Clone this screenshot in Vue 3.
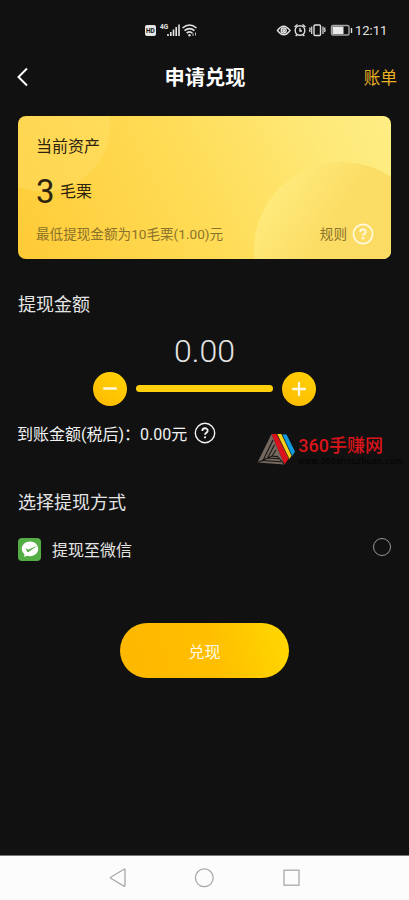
<script setup>
import { ref } from 'vue'

const balance = ref(3)
const amount = ref('0.00')
const received = ref('0.00')
</script>

<template>
  <div class="screen">
    <div class="status">
      <svg class="signal" width="54" height="16" viewBox="0 0 54 16">
        <rect x="0" y="3" width="11" height="11" rx="2" fill="#e6e6e6" />
        <text x="1" y="11.3" class="hd">HD</text>
        <text x="15" y="7.300" class="gen">4G</text>
        <path d="M23 14v-2M25.800 14v-4M28.500 14V7.500M31.200 14V5M34 14V2.500" stroke="#e6e6e6" stroke-width="1.600" />
        <g fill="none" stroke="#e0e0e0" stroke-width="1.600">
          <path d="M37.500 6q7-6 14 0M39.500 8.700q5-4.200 10 0M41.700 11.200q3-2.500 5.600 0" />
        </g>
        <circle cx="44.500" cy="13.300" r="1.200" fill="#e0e0e0" />
        <path d="M48 14v-3M50.500 10.500v3" stroke="#bdbdbd" />
      </svg>
      <div class="status-right">
        <svg width="78" height="16" viewBox="0 0 78 16" fill="none" stroke="#dedede" stroke-width="1.400">
          <path d="M.500 8.500q6-8.500 12.500 0Q7 17 .500 8.500Z" />
          <circle cx="6.700" cy="8.500" r="2.500" />
          <circle cx="6.700" cy="8.500" r=".8" fill="#dedede" />
          <circle cx="23" cy="8.500" r="4.800" />
          <path d="M17.500 5l3-2.500M28.500 5l-3-2.500M23 6v3h2M20 12.500l-1.300 1.500M26 12.500l1.300 1.500" />
          <rect x="37" y="3" width="6.500" height="10.500" rx="1" />
          <path d="M34.700 4.500v7.500M46 4.500v7.500M32.500 5.500l.8 1.500-.8 1.500.8 1.500M48.200 5.500l-.8 1.500.8 1.500-.8 1.500" stroke-width="1.200" />
          <rect x="54.500" y="3.500" width="17.500" height="9.500" rx="1.500" stroke="#a5a5a5" />
          <rect x="55.500" y="4.500" width="11" height="7.500" fill="#e8e8e8" stroke="none" />
          <path d="M74.500 6v5" />
        </svg>
        <span class="time">12:11</span>
      </div>
    </div>

    <header class="header">
      <svg class="back" width="12" height="20" viewBox="0 0 12 20" fill="none" stroke="#fff" stroke-width="2">
        <path d="M11 1.500L2.500 10l8.500 8.500" />
      </svg>
      <h1>申请兑现</h1>
      <a class="bill">账单</a>
    </header>

    <section class="card">
      <div class="card-title">当前资产</div>
      <div class="balance"><b>{{ balance }}</b><span>毛栗</span></div>
      <div class="card-foot">
        <span>最低提现金额为10毛栗(1.00)元</span>
        <span class="rule">规则
          <svg width="22" height="22" viewBox="0 0 22 22" fill="none" stroke="#fff9df" stroke-width="1.700">
            <circle cx="11" cy="11" r="9.600" />
            <path d="M8.300 9c0-3.600 5.400-3.600 5.400-.3 0 2-2.700 2-2.700 4.100" stroke-width="2" />
            <circle cx="11" cy="15.300" r="1.200" fill="#fff9df" stroke="none" />
          </svg>
        </span>
      </div>
    </section>

    <h2 class="amount-title">提现金额</h2>
    <div class="amount">{{ amount }}</div>
    <div class="slider">
      <button class="round">
        <svg width="34" height="34" viewBox="0 0 34 34"><path d="M11 16.500h12" /></svg>
      </button>
      <div class="track"></div>
      <button class="round">
        <svg width="34" height="34" viewBox="0 0 34 34"><path d="M11 17h12M17 11v12" /></svg>
      </button>
    </div>

    <div class="received">
      <span>到账金额(税后)：{{ received }}元</span>
      <svg width="22" height="22" viewBox="0 0 22 22" fill="none" stroke="#f2f2f2" stroke-width="1.400">
        <circle cx="11" cy="11" r="9.700" />
        <path d="M8.300 9c0-3.600 5.400-3.600 5.400-.3 0 2-2.700 2-2.700 4.100" stroke-width="1.800" />
        <circle cx="11" cy="15.300" r="1.100" fill="#f2f2f2" stroke="none" />
      </svg>
      <div class="mark">
        <svg width="38" height="34" viewBox="0 0 38 34">
          <path d="M13.500 2L-.500 30.500l27 2Z" fill="#75695f" />
          <path d="M15 8L5 28.500l18 1.300M16.500 13L9.500 26l12 .8M18 18l-4 6 6 .6M0 30.500L14 24M26 32L20 25" fill="none" stroke="#161412" stroke-width="1.100" />
          <path d="M13.500 2h5.500l12 24-4.500 6.500Z" fill="#d9121c" />
          <path d="M19 2h4.500l10.500 21-3 4.500Z" fill="#f6cf16" />
          <path d="M24 2.500h4.500l8.500 17-3 5Z" fill="#129bdc" />
          <path d="M18.800 2l12.400 25M23.800 2l10.200 22" stroke="#161412" stroke-width=".7" />
        </svg>
        <div class="mark-text">
          <strong>360手赚网</strong>
          <small>www.360shouzhuan.com</small>
        </div>
      </div>
    </div>

    <h2 class="method-title">选择提现方式</h2>
    <div class="method">
      <svg width="23" height="23" viewBox="0 0 23 23">
        <rect width="23" height="23" rx="4" fill="#55ad46" />
        <path d="M12 3.500c4.700 0 8.200 3.200 8.200 7.300s-3.500 7.400-8.200 7.400c-1 0-2-.2-3-.5L6.200 19l.3-2.800C4.800 14.900 3.800 13 3.800 10.800 3.800 6.700 7.300 3.500 12 3.500Z" fill="#fff" />
        <path d="M7.500 10l2.700 1.700 9.300-4.300-8.900 6.600q-.9.500-1.500-.5Z" fill="#55ad46" />
      </svg>
      <span>提现至微信</span>
      <i class="radio"></i>
    </div>

    <button class="submit">兑现</button>

    <nav class="nav">
      <svg width="190" height="20" viewBox="0 0 190 20" fill="none" stroke="#a9a9a9" stroke-width="1.300">
        <path d="M16 1.800v15.800q0 1-1 .5L1.700 10.300q-.7-.6 0-1.100L15 1.300q1-.5 1 .5Z" />
        <circle cx="95.300" cy="9.800" r="8.900" />
        <rect x="175" y="2.200" width="15" height="15" />
      </svg>
    </nav>
  </div>
</template>

<style>
body {
  margin: 0;
  background: #111;
}
</style>

<style scoped>
.screen {
  box-sizing: border-box;
  width: 409px;
  height: 900px;
  display: flex;
  flex-direction: column;
  overflow: hidden;
  background: #111;
  color: #e4e4e4;
  font-family: Roboto, "Noto Sans CJK SC", sans-serif;
  font-size: 16px;
  font-weight: 400;
}
.screen > * {
  flex-shrink: 0;
}
svg {
  display: block;
  overflow: visible;
}
button {
  border: 0;
  padding: 0;
  font: inherit;
}
h1,
h2 {
  margin: 0;
}
.status {
  display: flex;
  align-items: center;
  justify-content: space-between;
  height: 44px;
  padding: 16px 21px 0 145px;
  box-sizing: border-box;
}
.hd {
  font: bold 6.5px Roboto, sans-serif;
  fill: #111;
}
.gen {
  font: bold 6.5px Roboto, sans-serif;
  fill: #e6e6e6;
}
.status-right {
  display: flex;
  align-items: center;
}
.time {
  width: 33px;
  padding-top: 1px;
  font-size: 13px;
  line-height: 16px;
  white-space: nowrap;
}
.header {
  display: grid;
  grid-template-columns: 60px 1fr 60px;
  align-items: center;
  height: 66px;
  padding: 0 12px 0 16px;
  margin-bottom: 6px;
  box-sizing: border-box;
}
.header h1 {
  padding: 1px 3px 0 0;
  color: #fff;
  font-size: 20.2px;
  font-weight: 700;
  line-height: 30px;
  text-align: center;
}
.bill {
  color: #e8b022;
  font-size: 16.6px;
  text-align: right;
}
.card {
  display: flex;
  flex-direction: column;
  height: 143px;
  margin: 0 18px;
  padding: 20px 17px 0 18px;
  box-sizing: border-box;
  border-radius: 8px;
  color: #2d240f;
  background:
    radial-gradient(circle at 25px 8px, rgba(255, 226, 110, 0.4) 0 67px, transparent 68px),
    linear-gradient(65deg, #ffcb36 0%, #ffdc57 48%, #feea7b 85%, #ffee84 100%);
  position: relative;
  overflow: hidden;
}
.card::before {
  content: "";
  position: absolute;
  left: 236px;
  top: 46px;
  width: 176px;
  height: 176px;
  border-radius: 50%;
  background: linear-gradient(125deg, #ffeb7c 12%, #fbdc64 42%, #fbda62 100%);
}
.card > * {
  position: relative;
}
.card-title {
  line-height: 22px;
}
.balance {
  display: flex;
  align-items: center;
  height: 40px;
  margin-top: 14px;
}
.balance b {
  width: 24px;
  font-size: 33px;
  font-weight: 400;
  line-height: 40px;
}
.balance span {
  line-height: 24px;
}
.card-foot {
  display: flex;
  align-items: center;
  justify-content: space-between;
  height: 22px;
  margin-top: 11px;
  font-size: 13.6px;
  line-height: 20px;
  color: #8b722a;
}
.card-foot > span:first-child {
  padding-bottom: 1px;
}
.rule {
  display: flex;
  align-items: center;
  gap: 5px;
}
h2 {
  padding-left: 18px;
  font-size: 18px;
  font-weight: 400;
  line-height: 28px;
}
.amount-title {
  margin-top: 32px;
}
.amount {
  margin-top: 13px;
  font-size: 32px;
  font-weight: 300;
  line-height: 38px;
  text-align: center;
}
.slider {
  display: flex;
  align-items: center;
  justify-content: center;
  gap: 9px;
  height: 35px;
  margin-top: 1px;
}
.round {
  width: 34px;
  height: 34px;
  border-radius: 50%;
  background: linear-gradient(35deg, #ffb900, #ffd306);
}
.round path {
  fill: none;
  stroke: #fff8dc;
  stroke-width: 2.3;
  stroke-linecap: round;
}
.track {
  width: 137px;
  height: 7px;
  border-radius: 4px;
  background: #ffd00b;
}
.received {
  display: flex;
  align-items: center;
  height: 34px;
  margin-top: 10px;
  padding-left: 17px;
  color: #f2f2f2;
}
.received > svg {
  margin-left: 7px;
}
.mark {
  display: flex;
  align-items: center;
  gap: 2px;
  margin: 32px 0 0 42px;
}
.mark-text {
  display: flex;
  flex-direction: column;
  padding-top: 3px;
}
.mark strong {
  color: #d9151b;
  font-size: 18px;
  font-weight: 500;
  line-height: 20px;
  white-space: nowrap;
}
.mark small {
  color: #020202;
  font: 8.5px/10px "Liberation Sans", sans-serif;
  letter-spacing: 0.5px;
}
.method-title {
  margin-top: 39px;
}
.method {
  display: flex;
  align-items: center;
  height: 34px;
  margin-top: 15px;
  padding: 0 18px;
}
.method span {
  margin-left: 11px;
}
.radio {
  width: 18px;
  height: 18px;
  margin: -4px 0 0 auto;
  box-sizing: border-box;
  border: 1px solid #969696;
  border-radius: 50%;
}
.submit {
  width: 169px;
  height: 55px;
  margin: 57px auto 0;
  border-radius: 28px;
  color: #fff9e4;
  font-size: 16px;
  background: linear-gradient(75deg, #ffb800 10%, #ffbf00 55%, #ffd800 100%);
}
.nav {
  display: flex;
  height: 45px;
  box-sizing: border-box;
  margin-top: auto;
  padding: 12px 0 0 109px;
  border-top: 1px solid #777;
  background: #fcfcfc;
}
</style>
